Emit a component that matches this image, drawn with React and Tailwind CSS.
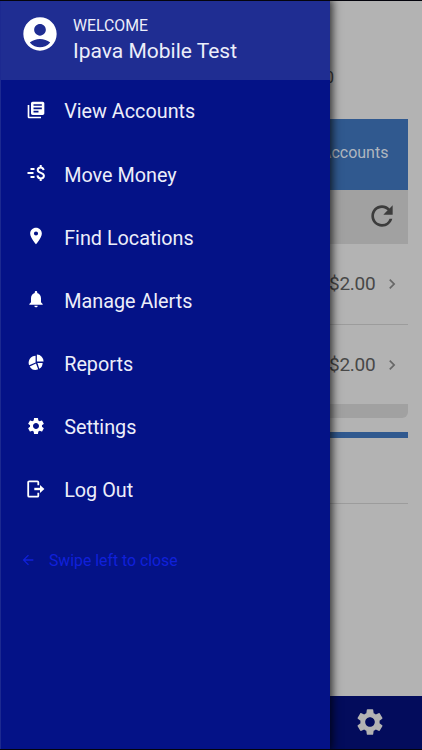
import React from "react";
import {
  MdAccountCircle,
  MdArrowBack,
  MdChevronRight,
  MdLibraryBooks,
  MdLocationOn,
  MdNotifications,
  MdRefresh,
  MdSettings,
} from "react-icons/md";

const MoneyIcon = () => (
  <svg width="20" height="20" viewBox="0 0 20 20" fill="none" stroke="currentColor">
    <path d="M4.5 6h4M1.5 10h6M4.5 14h4" strokeWidth="1.8" />
    <path
      d="M17.6 7.2C17.3 5.3 16.2 4.5 14.7 4.5c-1.8 0-3 1-3 2.5 0 3.7 6.2 2.1 6.2 5.8 0 1.6-1.3 2.6-3.1 2.6s-3.1-1-3.3-3M14.7 2v2.5M14.7 15.4V18"
      strokeWidth="2"
    />
  </svg>
);

const ReportsIcon = () => (
  <svg width="20" height="20" viewBox="0 0 20 20" fill="currentColor">
    <path d="M10.9 2.4a7 7 0 0 1 6.7 7.2h-6.7z" />
    <path d="M9.6 3.8v6.6L3.1 13.3a7 7 0 0 1 6.5-9.5z" />
    <path d="M10 11.5l2.2 5.8A7 7 0 0 1 3.7 14.4z" />
    <path d="M11.4 10.9h5.2a7 7 0 0 1-3.3 5.9z" />
  </svg>
);

const LogOutIcon = () => (
  <svg width="20" height="20" viewBox="0 0 20 20" fill="none" stroke="currentColor">
    <path
      d="M12.3 6.3V3.3a1 1 0 0 0-1-1H3.2a1 1 0 0 0-1 1v13.4a1 1 0 0 0 1 1h8.1a1 1 0 0 0 1-1V13.7"
      strokeWidth="1.8"
    />
    <path d="M8.3 10h7" strokeWidth="2.4" />
    <path d="M14 6L18.4 10l-4.4 4z" fill="currentColor" stroke="none" />
  </svg>
);

const menuItems = [
  { label: "View Accounts", icon: <MdLibraryBooks size={20} /> },
  { label: "Move Money", icon: <MoneyIcon /> },
  { label: "Find Locations", icon: <MdLocationOn size={20} /> },
  { label: "Manage Alerts", icon: <MdNotifications size={20} /> },
  { label: "Reports", icon: <ReportsIcon /> },
  { label: "Settings", icon: <MdSettings size={20} /> },
  { label: "Log Out", icon: <LogOutIcon /> },
];

const AccountRow = ({ balance }) => (
  <div className="flex h-20 items-center justify-end pr-[6.5px] text-[#484848]">
    <span className="text-[19px] tracking-[-0.3px]">{balance}</span>
    <MdChevronRight size={20} className="ml-[6.6px] text-[#686868]" />
  </div>
);

const AccountsPage = () => (
  <div className="flex h-full flex-col bg-[#b3b3b3]">
    <div className="flex h-[118.4px] items-end justify-end pr-[88px] pb-[31.4px]">
      <span className="text-[16px] leading-5 text-[#3c3c3c]">0</span>
    </div>

    <div className="mr-[13.6px] flex flex-1 flex-col">
      <div className="flex h-[71px] items-center justify-end bg-[#30598f] pr-[20px] pb-[4px]">
        <span className="text-[16px] text-[#afb6bf]">Accounts</span>
      </div>
      <div className="flex h-[54px] items-center justify-end bg-[#a1a1a1] pr-[10px] pb-[2px]">
        <MdRefresh size={32} className="text-[#3c3c3c]" />
      </div>
      <div className="border-b border-[#9c9c9c]">
        <AccountRow balance="$2.00" />
      </div>
      <AccountRow balance="$2.00" />
      <div className="-mt-[1.4px] h-[14px] rounded-br-md bg-[#a1a1a1]" />
      <div className="mt-[13.6px] h-[6.6px] bg-[#30598f]" />
      <div className="h-[65.6px] border-b border-[#9c9c9c]" />
    </div>

    <div className="flex h-[53px] items-center justify-end bg-[#030c5c] pr-[36.5px] pb-[2px]">
      <MdSettings size={32} className="text-[#b3b3b3]" />
    </div>
  </div>
);

const SideMenu = () => (
  <aside className="absolute inset-y-0 left-0 w-[329.7px] border-l border-[#1c2990] bg-[#041287] text-[#eceefa] shadow-[0_0_9px_2px_rgba(0,0,0,0.8)]">
    <div className="flex h-[79px] items-start bg-[#1f2d92] pl-[19px]">
      <MdAccountCircle size={40} className="mt-[12.5px] text-white" />
      <div className="ml-[13px] pt-[15px]">
        <p className="text-[15.8px] leading-5">WELCOME</p>
        <p className="text-[21px] leading-[30px]">Ipava Mobile Test</p>
      </div>
    </div>

    <nav className="pt-[0.6px]">
      {menuItems.map((item) => (
        <a key={item.label} className="flex h-[63.2px] items-center pl-[25.2px]">
          <span className="mb-[5px] text-white">{item.icon}</span>
          <span className="ml-[18px] text-[19.8px]">{item.label}</span>
        </a>
      ))}
    </nav>

    <div className="mt-[26.4px] flex items-center pl-[18.6px] text-[#1020da]">
      <MdArrowBack size={16} className="mb-[3px]" />
      <span className="ml-[13.4px] text-[15.8px]">Swipe left to close</span>
    </div>
  </aside>
);

const App = () => {
  return (
    <div className="h-[750px] w-[422px] overflow-hidden border-y border-[#04040c] font-['Roboto',sans-serif]">
      <div className="relative h-full overflow-hidden">
        <AccountsPage />
        <SideMenu />
      </div>
    </div>
  );
};

export default App;
